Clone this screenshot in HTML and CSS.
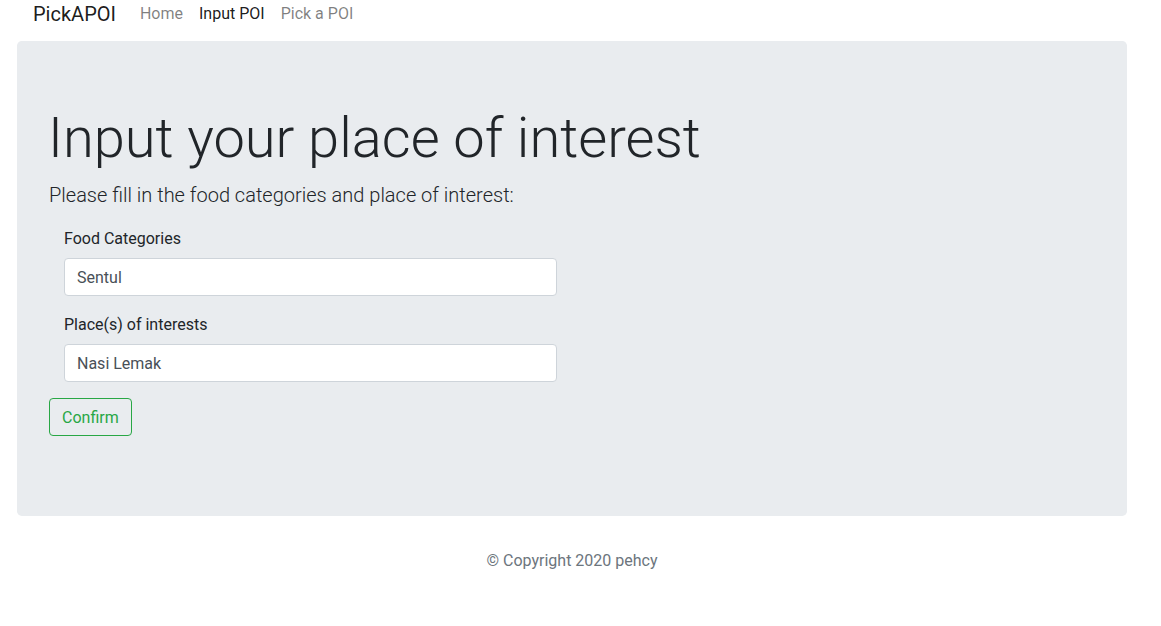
FILE: index.html
```html
<!DOCTYPE html>
<html lang="en">
<head>
<meta charset="utf-8">
<title>PickAPOI - Input POI</title>
<link rel="stylesheet" href="styles.css">
</head>
<body>
<div class="page">
  <nav class="navbar">
    <a class="brand" href="#">PickAPOI</a>
    <ul class="nav">
      <li><a class="nav-link" href="#">Home</a></li>
      <li><a class="nav-link active" href="#">Input POI</a></li>
      <li><a class="nav-link" href="#">Pick a POI</a></li>
    </ul>
  </nav>
  <main class="jumbotron">
    <h1 class="display">Input your place of interest</h1>
    <p class="lead">Please fill in the food categories and place of interest:</p>
    <form class="poi-form" onsubmit="return false">
      <div class="fields">
        <div class="form-group">
          <label for="food">Food Categories</label>
          <input id="food" class="form-control" type="text" value="Sentul">
        </div>
        <div class="form-group">
          <label for="place">Place(s) of interests</label>
          <input id="place" class="form-control" type="text" value="Nasi Lemak">
        </div>
      </div>
      <button class="btn-outline-success" type="submit">Confirm</button>
    </form>
  </main>
  <footer class="footer">© Copyright 2020 pehcy</footer>
</div>
<script src="script.js"></script>
</body>
</html>
```
FILE: styles.css
```css
* { box-sizing: border-box; }
html, body { margin: 0; padding: 0; background: #fff; }
body {
  font-family: Roboto, "Liberation Sans", sans-serif;
  font-size: 16px;
  line-height: 1.5;
  color: #212529;
}
.page {
  width: 1110px;
  margin-left: 17px;
}
.navbar {
  display: flex;
  align-items: center;
  height: 28px;
  padding: 0 16px;
  margin-bottom: 13px;
}
.brand {
  font-size: 20px;
  line-height: 30px;
  color: rgba(0,0,0,.9);
  text-decoration: none;
  margin-right: 16px;
  white-space: nowrap;
}
.nav {
  display: flex;
  list-style: none;
  margin: 0;
  padding: 0;
}
.nav-link {
  display: block;
  padding: 0 8px;
  color: rgba(0,0,0,.5);
  text-decoration: none;
  line-height: 26px;
}
.nav-link.active { color: rgba(0,0,0,.9); }
.jumbotron {
  background: #e9ecef;
  border-radius: 4.8px;
  padding: 64px 32px;
  margin-bottom: 32px;
}
.display {
  font-size: 56px;
  font-weight: 300;
  line-height: 1.2;
  margin: 0 0 8px -1px;
}
.lead {
  font-size: 20px;
  font-weight: 300;
  line-height: 1.5;
  margin: 0 0 16px;
}
.poi-form { margin: 0 0 16px; }
.fields {
  width: 508px;
  padding-left: 15px;
}
.form-group { margin-bottom: 16px; }
label {
  display: inline-block;
  padding-top: 1px;
  margin-bottom: 7px;
}
.form-control {
  display: block;
  width: 493px;
  height: 38px;
  padding: 6px 12px;
  font-family: inherit;
  font-size: 16px;
  line-height: 1.5;
  color: #495057;
  background: #fff;
  border: 1px solid #ced4da;
  border-radius: 4px;
  outline: none;
  caret-color: #212529;
}
.btn-outline-success {
  display: inline-block;
  font-family: inherit;
  font-size: 16px;
  line-height: 1.5;
  padding: 7px 12px 5px;
  color: #28a745;
  background: transparent;
  border: 1px solid #28a745;
  border-radius: 4px;
  cursor: pointer;
}
.footer {
  text-align: center;
  color: #6c757d;
  line-height: 24px;
  padding-top: 1px;
}
```
FILE: script.js
```js
var el = document.getElementById('place');
el.focus();
el.setSelectionRange(el.value.length, el.value.length);
```
